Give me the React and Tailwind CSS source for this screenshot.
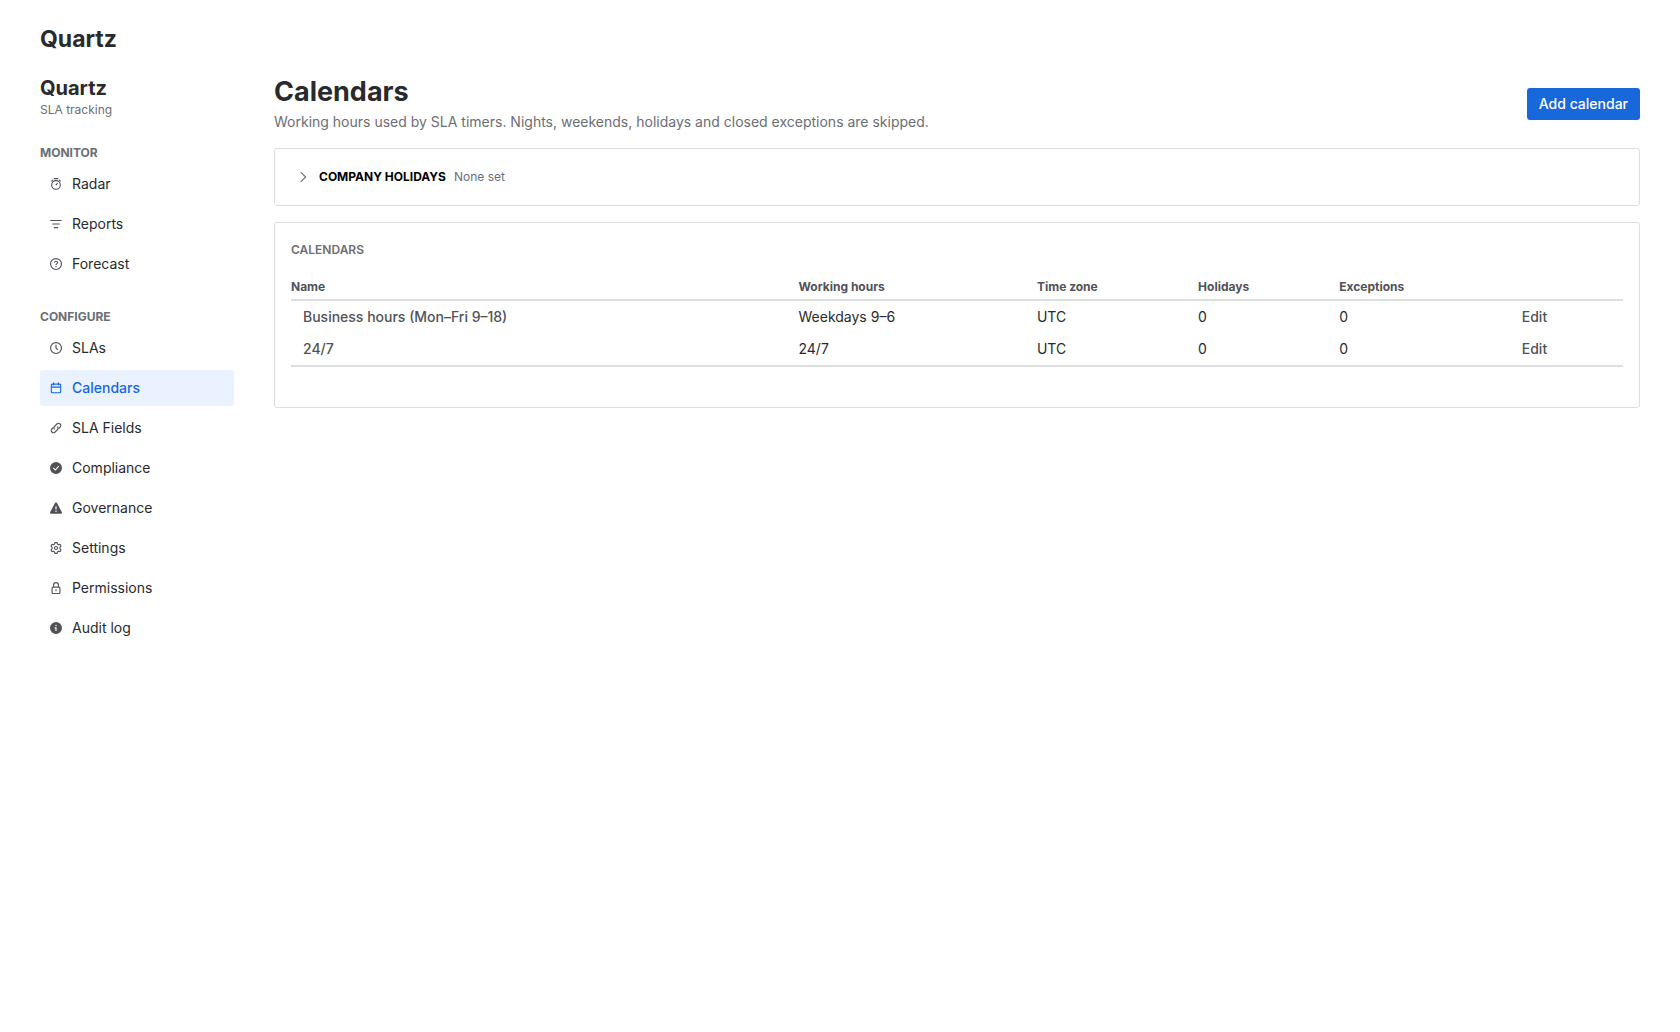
import { useState } from "react";
import clsx from "clsx";

// 16x16 glyphs, drawn at 12px in the nav
function Glyph({ children, className }) {
  return (
    <svg
      viewBox="0 0 16 16"
      className={clsx("h-3 w-3 shrink-0", className)}
      fill="none"
      stroke="currentColor"
      strokeWidth="1.5"
      aria-hidden="true"
    >
      {children}
    </svg>
  );
}

const icons = {
  stopwatch: (
    <>
      <circle cx="8" cy="9.25" r="5.75" />
      <path d="M5 .75h6M1.9 4.4l2-2M14.1 4.4l-2-2M7.6 9.6l2.6-2.6" />
    </>
  ),
  filter: <path d="M.5 3.25h15M3 8h10M5.25 12.75h5.5" />,
  question: (
    <>
      <circle cx="8" cy="8" r="7.25" />
      <path d="M5.9 6.4C5.9 5.1 6.8 4.4 8 4.4s2.1.8 2.1 1.9c0 1.5-2.1 1.5-2.1 3" />
      <circle cx="8" cy="11.4" r=".95" fill="currentColor" stroke="none" />
    </>
  ),
  clock: (
    <>
      <circle cx="8" cy="8" r="7.25" />
      <path d="M8 3.5V8l2.4 2.4" />
    </>
  ),
  calendar: (
    <>
      <rect x="1.75" y="2.75" width="12.5" height="11.5" rx="1.25" />
      <path d="M1.75 6.75h12.5M4.75 .5v4M11.25 .5v4" />
    </>
  ),
  link: (
    <>
      <path d="M6.2 10a3 3 0 0 1 0-4.3l3.3-3.3a3 3 0 0 1 4.2 4.2l-2.4 2.4" />
      <path d="M9.8 6a3 3 0 0 1 0 4.3l-3.3 3.3a3 3 0 0 1-4.2-4.2L4.7 7" />
    </>
  ),
  success: (
    <path
      fill="currentColor"
      stroke="none"
      fillRule="evenodd"
      d="M8 0a8 8 0 1 1 0 16A8 8 0 0 1 8 0m4.2 5.9-1.1-1-4 4.6-2.2-2.2-1.1 1.1 3.4 3.3z"
    />
  ),
  warning: (
    <path
      fill="currentColor"
      stroke="none"
      fillRule="evenodd"
      d="M6.7 1.2a1.5 1.5 0 0 1 2.6 0l6.4 12.1a1.5 1.5 0 0 1-1.3 2.2H1.6a1.5 1.5 0 0 1-1.3-2.2zM7.25 5.5v4.5h1.5V5.5zM8 11.3a1 1 0 1 0 0 2 1 1 0 0 0 0-2"
    />
  ),
  settings: (
    <>
      <path
        strokeLinejoin="round"
        d="M6.6.8h2.8l.5 2 1.4.8 2-.6 1.4 2.5-1.5 1.4v2.2l1.5 1.4-1.4 2.5-2-.6-1.4.8-.5 2H6.6l-.5-2-1.4-.8-2 .6-1.4-2.5 1.5-1.4V6.9L1.3 5.5 2.7 3l2 .6 1.4-.8z"
      />
      <circle cx="8" cy="8" r="2" />
    </>
  ),
  lock: (
    <>
      <rect x="2.75" y="6.75" width="10.5" height="8.5" rx="1.25" />
      <path d="M4.75 6.75V4a3.25 3.25 0 0 1 6.5 0v2.75M8 9.75v2.5" />
    </>
  ),
  info: (
    <path
      fill="currentColor"
      stroke="none"
      fillRule="evenodd"
      d="M8 0a8 8 0 1 1 0 16A8 8 0 0 1 8 0M6.25 7v1.5h1V12h1.5V7zM8 3.8a1 1 0 1 0 0 2 1 1 0 0 0 0-2"
    />
  ),
};

const NAV = [
  {
    title: "Monitor",
    items: [
      { label: "Radar", icon: "stopwatch" },
      { label: "Reports", icon: "filter" },
      { label: "Forecast", icon: "question" },
    ],
  },
  {
    title: "Configure",
    items: [
      { label: "SLAs", icon: "clock" },
      { label: "Calendars", icon: "calendar" },
      { label: "SLA Fields", icon: "link" },
      { label: "Compliance", icon: "success" },
      { label: "Governance", icon: "warning" },
      { label: "Settings", icon: "settings" },
      { label: "Permissions", icon: "lock" },
      { label: "Audit log", icon: "info" },
    ],
  },
];

const CALENDARS = [
  { name: "Business hours (Mon–Fri 9–18)", hours: "Weekdays 9–6", zone: "UTC", holidays: 0, exceptions: 0 },
  { name: "24/7", hours: "24/7", zone: "UTC", holidays: 0, exceptions: 0 },
];

function Sidebar({ active, onSelect }) {
  return (
    <aside className="w-[194px] shrink-0">
      <h2 className="text-xl leading-6 font-bold">Quartz</h2>
      <p className="text-xs leading-5 text-[#6b6e76]">SLA tracking</p>

      <nav className="mt-6 flex flex-col gap-[26px]">
        {NAV.map((section) => (
          <div key={section.title}>
            <h3 className="text-xs leading-[18px] font-bold text-[#6b6e76] uppercase">
              {section.title}
            </h3>
            <ul className="mt-1 flex flex-col gap-1">
              {section.items.map((item) => {
                const isActive = item.label === active;
                return (
                  <li key={item.label}>
                    <a
                      href="#"
                      onClick={(e) => {
                        e.preventDefault();
                        onSelect(item.label);
                      }}
                      className={clsx(
                        "flex h-9 items-center gap-2.5 rounded-[3px] px-2.5 text-sm",
                        isActive ? "bg-[#e9f2fe] font-medium text-[#1868db]" : "hover:bg-[#f0f1f2]"
                      )}
                    >
                      <Glyph className={isActive ? "text-[#1868db]" : "text-[#505258]"}>
                        {icons[item.icon]}
                      </Glyph>
                      {item.label}
                    </a>
                  </li>
                );
              })}
            </ul>
          </div>
        ))}
      </nav>
    </aside>
  );
}

function HolidaysCard() {
  const [open, setOpen] = useState(false);

  return (
    <section className="rounded-[3px] border border-[#dddee1] px-4 py-3">
      <button
        type="button"
        aria-expanded={open}
        onClick={() => setOpen(!open)}
        className="flex h-8 items-center gap-2 pl-1 text-xs"
      >
        <span className="flex w-4 justify-center">
          <Glyph className={clsx("text-[#6b6e76]", open && "rotate-90")}>
            <path d="M5 1.5 11.5 8 5 14.5" />
          </Glyph>
        </span>
        <span className="font-bold text-black uppercase">Company holidays</span>
        <span className="text-[#6b6e76]">None set</span>
      </button>
    </section>
  );
}

function CalendarsCard() {
  return (
    <section className="mt-4 rounded-[3px] border border-[#dddee1] px-4 pt-[19px] pb-10">
      <h2 className="text-xs leading-4 font-semibold text-[#6b6e76] uppercase">Calendars</h2>

      <table className="mt-3 w-full table-fixed text-left text-sm">
        <colgroup>
          <col className="w-[37.5%]" />
          <col className="w-[17.9%]" />
          <col className="w-[12.1%]" />
          <col className="w-[10.6%]" />
          <col className="w-[12.8%]" />
          <col />
        </colgroup>
        <thead className="border-b-2 border-[#dddee1] text-xs text-[#505258]">
          <tr className="h-[30px]">
            <th className="pt-1 font-bold">Name</th>
            <th className="px-2 pt-1 font-bold">Working hours</th>
            <th className="px-2 pt-1 font-bold">Time zone</th>
            <th className="px-2 pt-1 font-bold">Holidays</th>
            <th className="px-2 pt-1 font-bold">Exceptions</th>
            <th aria-label="Actions" />
          </tr>
        </thead>
        <tbody className="border-b-2 border-[#dddee1]">
          {CALENDARS.map((cal) => (
            <tr key={cal.name}>
              <td className="p-0">
                <button type="button" className="h-8 px-3 font-medium text-[#505258]">
                  {cal.name}
                </button>
              </td>
              <td className="px-2">{cal.hours}</td>
              <td className="px-2">{cal.zone}</td>
              <td className="px-2">{cal.holidays}</td>
              <td className="px-2">{cal.exceptions}</td>
              <td className="px-2">
                <button type="button" className="h-8 px-3 font-medium text-[#505258]">
                  Edit
                </button>
              </td>
            </tr>
          ))}
        </tbody>
      </table>
    </section>
  );
}

export default function App() {
  const [active, setActive] = useState("Calendars");

  return (
    <div className="min-h-screen bg-white px-10 pt-6 font-['Inter',sans-serif] text-[#292a2e]">
      <h1 className="text-[23px] leading-[30px] font-bold">Quartz</h1>

      <div className="mt-[22px] flex gap-10">
        <Sidebar active={active} onSelect={setActive} />

        <main className="min-w-0 flex-1">
          <header className="flex items-center justify-between">
            <div>
              <h1 className="text-[27px] leading-8 font-bold">Calendars</h1>
              <p className="mt-1 text-sm leading-5 text-[#6b6e76]">
                Working hours used by SLA timers. Nights, weekends, holidays and closed exceptions are skipped.
              </p>
            </div>
            <button
              type="button"
              className="h-8 rounded-[3px] bg-[#1868db] px-3 text-sm font-medium text-white hover:bg-[#1558bc]"
            >
              Add calendar
            </button>
          </header>

          <div className="mt-4">
            <HolidaysCard />
            <CalendarsCard />
          </div>
        </main>
      </div>
    </div>
  );
}
